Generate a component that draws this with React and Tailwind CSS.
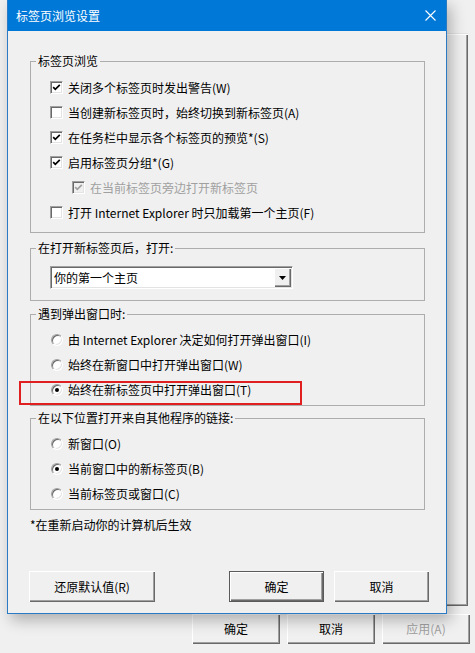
import React from "react";

const FONT = "font-['Microsoft_YaHei','Noto_Sans_CJK_SC',sans-serif]";

function CheckBox({ checked, disabled }) {
  return (
    <span
      className={`relative w-[13px] h-[13px] shrink-0 border border-t-[#a0a0a0] border-l-[#a0a0a0] border-b-white border-r-white shadow-[inset_1px_1px_0_#696969,inset_-1px_-1px_0_#e3e3e3] ${
        disabled ? "bg-[#f0f0f0]" : "bg-white"
      }`}
    >
      {checked && (
        <svg
          className="absolute left-[-1px] top-[-1px]"
          width="13"
          height="13"
          viewBox="0 0 13 13"
        >
          <path
            d="M3.2 6.2 L5.3 8.4 L9.8 3.8"
            fill="none"
            stroke={disabled ? "#a0a0a0" : "#000"}
            strokeWidth="1.7"
          />
        </svg>
      )}
    </span>
  );
}

function Radio({ checked }) {
  return (
    <span className="relative flex items-center justify-center w-[12px] h-[12px] shrink-0 rounded-full bg-white border border-t-[#a0a0a0] border-l-[#a0a0a0] border-b-white border-r-white shadow-[inset_1px_1px_0_#696969,inset_-1px_-1px_0_#e3e3e3]">
      {checked && <span className="w-[4px] h-[4px] rounded-full bg-black" />}
    </span>
  );
}

function CheckRow({ checked, disabled, indent, children }) {
  return (
    <div
      className={`flex items-center h-[25px] gap-[5px] ${
        indent ? "pl-[41px]" : "pl-[19px]"
      }`}
    >
      <CheckBox checked={checked} disabled={disabled} />
      <span
        className={`text-[12px] leading-[16px] whitespace-nowrap ${
          disabled ? "text-[#a0a0a0]" : "text-black"
        }`}
      >
        {children}
      </span>
    </div>
  );
}

function RadioRow({ checked, children }) {
  return (
    <div className="flex items-center h-[25px] gap-[5px] pl-[20px]">
      <Radio checked={checked} />
      <span className="text-[12px] leading-[16px] whitespace-nowrap text-black">
        {children}
      </span>
    </div>
  );
}

function Group({ label, className, children }) {
  return (
    <fieldset className={`border border-[#adadad] ${className}`}>
      <legend className="ml-[5px] px-[2px] text-[12px] leading-[16px] text-black">
        {label}
      </legend>
      {children}
    </fieldset>
  );
}

function Button({ children, def, disabled, className }) {
  return (
    <div
      className={`flex items-center justify-center bg-[#f0f0f0] text-[12px] leading-[16px] ${
        def
          ? "border border-[#5a5a5a] shadow-[inset_1px_1px_0_#fff,inset_-1px_-1px_0_#696969,inset_-2px_-2px_0_#a0a0a0]"
          : "shadow-[inset_1px_1px_0_#fff,inset_-1px_-1px_0_#696969,inset_-2px_-2px_0_#a0a0a0]"
      } ${disabled ? "text-[#a0a0a0]" : "text-black"} ${className}`}
    >
      {children}
    </div>
  );
}

export default function App() {
  return (
    <div
      className={`relative w-[475px] h-[653px] overflow-hidden bg-[#f0f0f0] ${FONT}`}
    >
      {/* background window (behind the dialog) */}
      <div className="absolute left-[200px] top-[33px] w-[268px] h-[573px] bg-[#f0f0f0] shadow-[inset_1px_1px_0_#e3e3e3,inset_2px_2px_0_#fff,inset_-1px_-1px_0_#696969,inset_-2px_-2px_0_#a0a0a0]" />
      <div className="absolute left-[192px] top-[614px] flex gap-[7px]">
        <Button className="w-[88px] h-[30px]">确定</Button>
        <Button className="w-[88px] h-[30px]">取消</Button>
        <Button className="w-[88px] h-[30px]" disabled>
          应用(A)
        </Button>
      </div>

      {/* dialog */}
      <div className="absolute left-[7px] top-0 w-[440px] h-[614px] flex flex-col bg-[#f0f0f0] border-x border-b border-[#2a7ac4] shadow-[4px_6px_14px_rgba(0,0,0,0.28)]">
        <div className="flex items-center justify-between h-[31px] bg-[#0078d7] shrink-0">
          <span className="pl-[8px] text-[12px] leading-[16px] text-white">
            标签页浏览设置
          </span>
          <svg className="mr-[10px]" width="11" height="11" viewBox="0 0 11 11">
            <path
              d="M0.5 0.5 L10.5 10.5 M10.5 0.5 L0.5 10.5"
              stroke="#fff"
              strokeWidth="1.1"
            />
          </svg>
        </div>

        <div className="flex flex-col pl-[22px] pr-[21px]">
          <Group label="标签页浏览" className="mt-[22px] pt-[6px] pb-[7px]">
            <CheckRow checked>关闭多个标签页时发出警告(W)</CheckRow>
            <CheckRow>当创建新标签页时，始终切换到新标签页(A)</CheckRow>
            <CheckRow checked>在任务栏中显示各个标签页的预览*(S)</CheckRow>
            <CheckRow checked>启用标签页分组*(G)</CheckRow>
            <CheckRow checked disabled indent>
              在当前标签页旁边打开新标签页
            </CheckRow>
            <CheckRow>打开 Internet Explorer 时只加载第一个主页(F)</CheckRow>
          </Group>

          <Group
            label="在打开新标签页后，打开:"
            className="mt-[7px] pt-[10px] pb-[11px]"
          >
            <div className="ml-[19px] w-[243px] h-[23px] flex items-center bg-white border border-t-[#a0a0a0] border-l-[#a0a0a0] border-b-white border-r-white shadow-[inset_1px_1px_0_#696969,inset_-1px_-1px_0_#e3e3e3]">
              <span className="flex-1 pl-[3px] text-[12px] leading-[16px] text-black">
                你的第一个主页
              </span>
              <div className="mr-[1px] w-[17px] h-[19px] flex items-center justify-center bg-[#f0f0f0] shadow-[inset_1px_1px_0_#fff,inset_-1px_-1px_0_#696969,inset_-2px_-2px_0_#a0a0a0]">
                <svg width="7" height="4" viewBox="0 0 7 4">
                  <path d="M0 0 H7 L3.5 4 Z" fill="#000" />
                </svg>
              </div>
            </div>
          </Group>

          <Group label="遇到弹出窗口时:" className="mt-[5px] pt-[5px] pb-[3px]">
            <RadioRow>由 Internet Explorer 决定如何打开弹出窗口(I)</RadioRow>
            <RadioRow>始终在新窗口中打开弹出窗口(W)</RadioRow>
            <RadioRow checked>始终在新标签页中打开弹出窗口(T)</RadioRow>
          </Group>

          <Group
            label="在以下位置打开来自其他程序的链接:"
            className="mt-[4px] pt-[5px] pb-[3px]"
          >
            <RadioRow>新窗口(O)</RadioRow>
            <RadioRow checked>当前窗口中的新标签页(B)</RadioRow>
            <RadioRow>当前标签页或窗口(C)</RadioRow>
          </Group>

          <p className="mt-[7px] text-[12px] leading-[16px] text-black">
            *在重新启动你的计算机后生效
          </p>
        </div>

        <div className="flex items-center mt-[38px] pl-[21px] pr-[17px]">
          <Button className="w-[126px] h-[31px]">还原默认值(R)</Button>
          <Button def className="ml-auto w-[95px] h-[31px]">
            确定
          </Button>
          <Button className="ml-[10px] w-[95px] h-[31px]">取消</Button>
        </div>
      </div>

      {/* red highlight annotation */}
      <div className="absolute left-[19px] top-[381px] w-[283px] h-[24px] border-2 border-[#e02020]" />
    </div>
  );
}
